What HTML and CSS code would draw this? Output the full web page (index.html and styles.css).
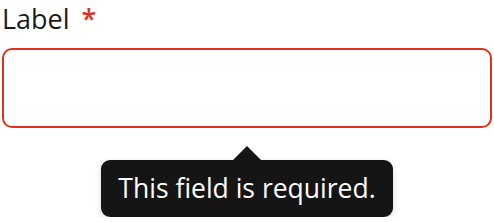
FILE: index.html
```html
<!DOCTYPE html>
<html lang="en">
<head>
    <meta charset="UTF-8">
    <title>Required field</title>
    <link rel="stylesheet" href="styles.css">
</head>
<body>
    <div class="field">
        <label class="label" for="name">Label <span class="required">*</span></label>
        <input class="input invalid" id="name" type="text">
        <div class="hint">
            <div class="tooltip" role="alert">This field is required.</div>
        </div>
    </div>
</body>
</html>
```

FILE: styles.css
```css
* {
    margin: 0;
    padding: 0;
    box-sizing: border-box;
}

body {
    background: #fff;
    font-family: "Open Sans", Lato, sans-serif;
    color: #1a1a1a;
}

.field {
    padding: 0 2px;
}

.label {
    display: block;
    font-size: 27px;
    line-height: 37px;
    height: 48px;
}

.required {
    color: #e0301e;
    margin-left: 5px;
    font-weight: 600;
}

.input {
    display: block;
    width: 100%;
    height: 80px;
    border: 2px solid #e0301e;
    border-radius: 10px;
    outline: none;
    font: inherit;
    padding: 0 16px;
}

.hint {
    display: flex;
    justify-content: center;
    padding-top: 32px;
}

.tooltip {
    position: relative;
    background: #151515;
    color: #fff;
    font-size: 26.5px;
    line-height: 57px;
    padding: 0 17px;
    border-radius: 9px;
    white-space: nowrap;
    box-shadow: 0 2px 6px rgba(0, 0, 0, 0.15);
}

.tooltip::before {
    content: "";
    position: absolute;
    left: 50%;
    top: -14px;
    margin-left: -14px;
    border-left: 14px solid transparent;
    border-right: 14px solid transparent;
    border-bottom: 14px solid #151515;
}
```
